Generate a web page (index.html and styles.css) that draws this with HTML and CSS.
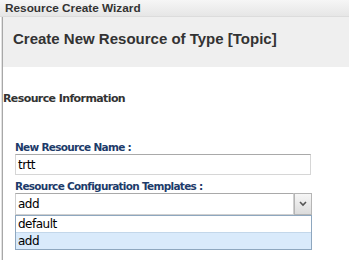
FILE: index.html
```html
<!DOCTYPE html>
<html>
<head>
<meta charset="utf-8">
<link rel="stylesheet" href="styles.css">
</head>
<body>
<div class="titlebar">Resource Create Wizard</div>
<div class="panel">
  <div class="header">Create New Resource of Type [Topic]</div>
  <div class="body">
    <div class="section">Resource Information</div>
    <div class="form">
      <div class="label">New Resource Name :</div>
      <div class="input">trtt</div>
      <div class="label label2">Resource Configuration Templates :</div>
      <div class="select">
        <div class="select-value">add</div>
        <div class="select-btn">
          <svg width="8" height="6" viewBox="0 0 8 6"><path d="M1 1 L4 4 L7 1" fill="none" stroke="#555" stroke-width="1.6"/></svg>
        </div>
      </div>
      <div class="listbox">
        <div class="opt">default</div>
        <div class="opt sel">add</div>
      </div>
    </div>
  </div>
</div>
</body>
</html>
```
FILE: styles.css
```css
html, body { margin: 0; padding: 0; background: #fff; }
body { width: 349px; height: 260px; overflow: hidden; }
.titlebar {
  height: 17px;
  box-sizing: border-box;
  padding: 1px 0 0 5px;
  background: linear-gradient(#f6f6f6, #e6e6e6);
  border-bottom: 1px solid #dcdcdc;
  font: bold 11.8px/14px "Liberation Sans", Arial, sans-serif;
  color: #333;
}
.panel {
  margin-left: 2px;
  border-left: 1px solid #a8a8a8;
  box-shadow: -1px 0 0 #e2e2e2;
  height: 243px;
}
.header {
  height: 50px;
  box-sizing: border-box;
  padding: 12px 0 0 10px;
  background: #efefef;
  font: bold 15px/19px "Liberation Sans", Arial, sans-serif;
  color: #333;
}
.body { background: #fff; }
.section {
  padding-top: 25px;
  font: bold 11px/14px "DejaVu Sans", Verdana, sans-serif;
  letter-spacing: -0.6px;
  color: #333;
}
.form { padding: 34px 0 0 12px; }
.label {
  font: bold 10.5px/14px "DejaVu Sans", Verdana, sans-serif;
  letter-spacing: -0.7px;
  color: #1d3b6a;
  height: 14px;
}
.label2 { margin-top: 4px; }
.input {
  margin-top: 0;
  width: 296px;
  height: 21px;
  box-sizing: border-box;
  border: 1px solid #d6d6d6;
  border-top-color: #a9a9a9;
  padding: 2px 0 0 2px;
  font: 12px/16px "DejaVu Sans", Verdana, sans-serif;
  letter-spacing: -0.5px;
  color: #000;
}
.select {
  display: flex;
  width: 297px;
  height: 22px;
}
.select-value {
  flex: 1;
  box-sizing: border-box;
  border: 1px solid #cfcfcf;
  border-top-color: #a9a9a9;
  padding: 2px 0 0 2px;
  font: 12px/16px "DejaVu Sans", Verdana, sans-serif;
  letter-spacing: -0.5px;
  color: #000;
}
.select-btn {
  width: 18px;
  box-sizing: border-box;
  border: 1px solid #b5b5b5;
  background: linear-gradient(#f6f6f6, #dcdcdc);
  display: flex;
  align-items: center;
  justify-content: center;
}
.listbox {
  width: 297px;
  box-sizing: border-box;
  border: 1px solid #8ea7bf;
  background: #fff;
}
.opt {
  height: 16px;
  padding-left: 2px;
  font: 12px/16px "DejaVu Sans", Verdana, sans-serif;
  letter-spacing: -0.5px;
  color: #000;
}
.opt.sel {
  background: #d9eafb;
  border-top: 1px solid #c3d7ea;
}
```
